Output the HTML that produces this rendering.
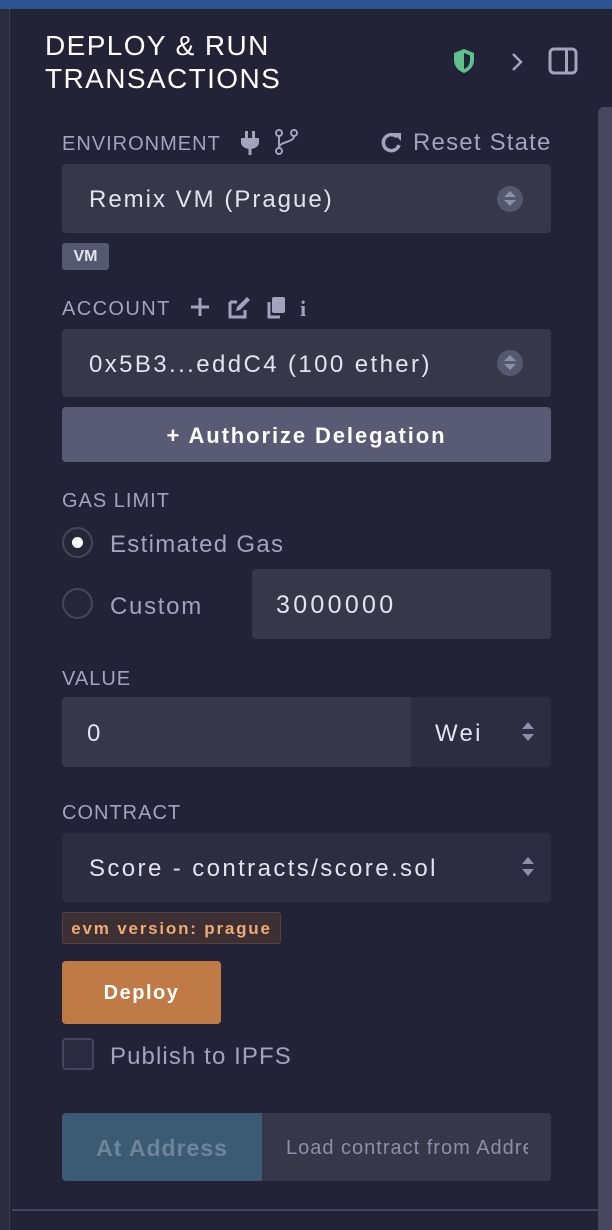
<!DOCTYPE html>
<html><head><style>
*{margin:0;padding:0;box-sizing:border-box}
body{width:612px;height:1230px;background:#222336;position:relative;overflow:hidden;font-family:"Liberation Sans",sans-serif;color:#a2a3bd}
.a{position:absolute}
.lbl{position:absolute;left:62px;font-size:20px;color:#a2a3bd;letter-spacing:1px}
.box{position:absolute;background:#363749;border-radius:4px}
.t{position:absolute;font-size:24px;color:#e2e3ef}
.arr{position:absolute;width:26px;height:26px;border-radius:50%;background:#55586e}
.arr:before{content:"";position:absolute;left:7px;top:5px;border:6px solid transparent;border-bottom:6px solid #8c8fa8;border-top:0}
.arr:after{content:"";position:absolute;left:7px;top:14px;border:6px solid transparent;border-top:6px solid #8c8fa8;border-bottom:0}
.sa{position:absolute;width:14px;height:22px}
.sa:before{content:"";position:absolute;left:1px;top:1px;border:6px solid transparent;border-bottom:7px solid #8c8fa8;border-top:0}
.sa:after{content:"";position:absolute;left:1px;top:13px;border:6px solid transparent;border-top:7px solid #8c8fa8;border-bottom:0}
</style></head><body>
<div class="a" style="left:0;top:0;width:612px;height:9px;background:#2b5492"></div>
<div class="a" style="left:0;top:9px;width:10px;height:1221px;background:#2a2b3f;border-right:1px solid #3b3c52"></div>
<div class="a" style="left:598px;top:107px;width:14px;height:1123px;background:#46475e;border-radius:6px 0 0 0"></div>
<div class="a" style="left:12px;top:1209px;width:586px;height:2px;background:#45465c"></div>

<div class="a" style="left:45px;top:29px;font-size:28px;line-height:33px;color:#fff;letter-spacing:1.4px">DEPLOY &amp; RUN<br>TRANSACTIONS</div>
<svg class="a" style="left:452px;top:48px" width="24" height="26" viewBox="0 0 24 26"><path d="M12 1 L22 5 V12 C22 19 17 23 12 25 C7 23 2 19 2 12 V5Z" fill="#5ec28d"/><path d="M12 5 L18 7.5 V12 C18 17 15 20 12 21Z" fill="#222336"/></svg>
<svg class="a" style="left:510px;top:52px" width="14" height="20"><path d="M3 2 L11 10 L3 18" stroke="#a2a3bd" stroke-width="2.5" fill="none"/></svg>
<svg class="a" style="left:548px;top:47px" width="30" height="28"><rect x="2" y="2" width="26" height="24" rx="4" stroke="#a2a3bd" stroke-width="3" fill="none"/><rect x="17" y="3" width="3" height="22" fill="#a2a3bd"/></svg>

<div class="lbl" style="top:133px">ENVIRONMENT</div>
<svg class="a" style="left:240px;top:130px" width="20" height="26"><rect x="5" y="1" width="3" height="7" fill="#a2a3bd"/><rect x="12" y="1" width="3" height="7" fill="#a2a3bd"/><path d="M1 8 H19 V12 C19 17 14 19 10 19 C6 19 1 17 1 12Z" fill="#a2a3bd"/><rect x="8.5" y="18" width="3" height="7" fill="#a2a3bd"/></svg>
<svg class="a" style="left:274px;top:128px" width="26" height="28"><circle cx="5" cy="5" r="3" stroke="#a2a3bd" stroke-width="2" fill="none"/><circle cx="5" cy="23" r="3" stroke="#a2a3bd" stroke-width="2" fill="none"/><circle cx="20" cy="5" r="3" stroke="#a2a3bd" stroke-width="2" fill="none"/><path d="M5 8V20 M20 8 C20 15 5 13 5 20" stroke="#a2a3bd" stroke-width="2" fill="none"/></svg>
<svg class="a" style="left:380px;top:131px" width="24" height="24"><path d="M19 14 A8 8 0 1 1 17 6" stroke="#a2a3bd" stroke-width="3.5" fill="none"/><path d="M13 2 L21 2 L21 10Z" fill="#a2a3bd"/></svg>
<div class="a" style="left:413px;top:129px;font-size:24px;color:#a2a3bd;letter-spacing:1.2px">Reset State</div>
<div class="box" style="left:62px;top:164px;width:489px;height:69px"></div>
<div class="t" style="left:89px;top:186px;letter-spacing:2px">Remix VM (Prague)</div>
<div class="arr" style="left:497px;top:186px"></div>
<div class="a" style="left:62px;top:243px;width:47px;height:27px;background:#55586e;border-radius:3px;color:#e2e3ef;font-weight:bold;font-size:16px;text-align:center;line-height:27px">VM</div>

<div class="lbl" style="top:298px;letter-spacing:1.4px">ACCOUNT</div>
<svg class="a" style="left:190px;top:297px" width="20" height="20"><path d="M10 1V19M1 10H19" stroke="#a2a3bd" stroke-width="3"/></svg>
<svg class="a" style="left:227px;top:296px" width="24" height="24"><path d="M3 6 H10 M3 6 V21 H18 V14" stroke="#a2a3bd" stroke-width="3" fill="none"/><path d="M9 15 L10 11 L20 1 L23 4 L13 14Z" fill="#a2a3bd"/></svg>
<svg class="a" style="left:265px;top:296px" width="22" height="24"><rect x="7" y="1" width="13" height="16" rx="2" fill="#a2a3bd"/><path d="M4 6 V21 H15" stroke="#a2a3bd" stroke-width="3" fill="none"/></svg>
<div class="a" style="left:300px;top:296px;font-size:22px;font-family:'Liberation Serif',serif;font-weight:bold;color:#a2a3bd">i</div>
<div class="box" style="left:62px;top:329px;width:489px;height:68px"></div>
<div class="t" style="left:89px;top:351px;letter-spacing:2.4px">0x5B3...eddC4 (100 ether)</div>
<div class="arr" style="left:497px;top:350px"></div>
<div class="a" style="left:62px;top:407px;width:489px;height:55px;background:#595a73;border-radius:4px;color:#fff;font-weight:bold;font-size:22px;text-align:center;line-height:57px;letter-spacing:1.9px">+ Authorize Delegation</div>

<div class="lbl" style="top:490px">GAS LIMIT</div>
<div class="a" style="left:62px;top:527px;width:31px;height:31px;border-radius:50%;border:2px solid #45465c;background:#252638"></div>
<div class="a" style="left:72px;top:537px;width:11px;height:11px;border-radius:50%;background:#fff"></div>
<div class="a" style="left:110px;top:531px;font-size:24px;color:#a2a3bd;letter-spacing:1.3px">Estimated Gas</div>
<div class="a" style="left:62px;top:588px;width:31px;height:31px;border-radius:50%;border:2px solid #45465c;background:#252638"></div>
<div class="a" style="left:110px;top:593px;font-size:24px;color:#a2a3bd;letter-spacing:1.7px">Custom</div>
<div class="box" style="left:252px;top:569px;width:299px;height:70px"></div>
<div class="t" style="left:276px;top:591px;font-size:25px;letter-spacing:3.3px">3000000</div>

<div class="lbl" style="top:668px">VALUE</div>
<div class="box" style="left:62px;top:697px;width:349px;height:70px;border-radius:4px 0 0 4px"></div>
<div class="a" style="left:411px;top:697px;width:140px;height:70px;background:#2c2d40;border-radius:0 4px 4px 0"></div>
<div class="t" style="left:87px;top:720px">0</div>
<div class="t" style="left:435px;top:720px;letter-spacing:2.3px">Wei</div>
<div class="sa" style="left:521px;top:721px"></div>

<div class="lbl" style="top:802px">CONTRACT</div>
<div class="box" style="left:62px;top:833px;width:489px;height:69px;background:#2c2d40"></div>
<div class="t" style="left:89px;top:855px;letter-spacing:2.4px">Score - contracts/score.sol</div>
<div class="sa" style="left:521px;top:856px"></div>

<div class="a" style="left:62px;top:912px;width:219px;height:32px;background:#3d3035;border:1px solid #5a4036;border-radius:3px;color:#f0a96e;font-weight:bold;font-size:17px;text-align:center;line-height:32px;letter-spacing:1.8px">evm version: prague</div>
<div class="a" style="left:62px;top:961px;width:159px;height:63px;background:#c07a45;border-radius:4px;color:#fff;font-weight:bold;font-size:20px;text-align:center;line-height:65px;letter-spacing:1.5px">Deploy</div>
<div class="a" style="left:62px;top:1038px;width:32px;height:32px;border:2px solid #45465c;border-radius:4px;background:#2a2b3f"></div>
<div class="a" style="left:110px;top:1043px;font-size:24px;color:#a2a3bd;letter-spacing:1.1px">Publish to IPFS</div>

<div class="a" style="left:62px;top:1113px;width:200px;height:68px;background:#3b5b74;border-radius:4px 0 0 4px;color:#6f8499;font-weight:bold;font-size:23px;text-align:center;line-height:70px;letter-spacing:1px">At Address</div>
<div class="a" style="left:262px;top:1113px;width:289px;height:68px;background:#363749;border-radius:0 4px 4px 0;overflow:hidden"><div style="position:absolute;left:24px;top:24px;font-size:20px;color:#8c8fa8;white-space:nowrap;width:242px;overflow:hidden;letter-spacing:1px">Load contract from Address</div></div>
</body></html>
